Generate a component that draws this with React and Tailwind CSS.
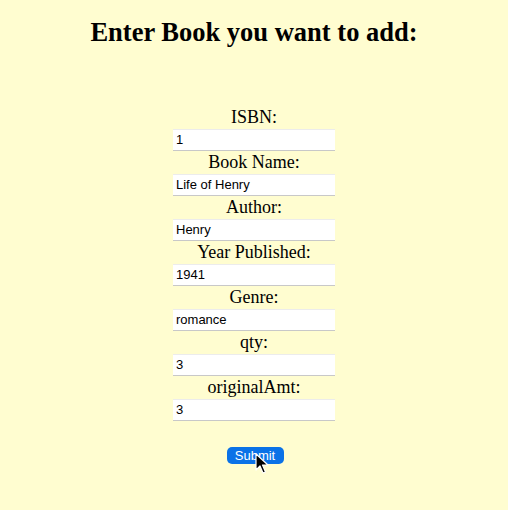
import React from "react";

const fields = [
  ["ISBN:", "1"],
  ["Book Name:", "Life of Henry"],
  ["Author:", "Henry"],
  ["Year Published:", "1941"],
  ["Genre:", "romance"],
  ["qty:", "3"],
  ["originalAmt:", "3"],
];

export default function App() {
  return (
    <div className="relative w-[508px] h-[510px] bg-[#fffdd0] flex flex-col items-center font-['Liberation_Serif',serif] text-black">
      <h1 className="mt-[17px] text-[26.5px] leading-[30px] font-bold">Enter Book you want to add:</h1>
      <div className="mt-[59px] flex flex-col items-center">
        {fields.map(([label, value]) => (
          <div key={label} className="flex flex-col items-center">
            <div className="text-[18px] leading-[23px] h-[23px]">{label}</div>
            <div className="w-[162px] h-[22px] bg-white border-t border-t-[#ececec] border-b border-b-[#c8c8c8] flex items-center pl-[3px] font-['Liberation_Sans',sans-serif] text-[13px] text-black">
              {value}
            </div>
          </div>
        ))}
        <button className="mt-[26px] ml-[2px] w-[57px] h-[17px] rounded-[5px] bg-[#0b72e7] text-white font-['Liberation_Sans',sans-serif] text-[13px] leading-[17px] font-medium">
          Submit
        </button>
      </div>
      <svg className="absolute left-[255px] top-[453px]" width="14" height="22" viewBox="0 0 14 22">
        <path d="M1 1 L1 17 L5 13 L8 20 L10.5 19 L7.5 12 L13 12 Z" fill="#000" stroke="#fff" strokeWidth="1.2" strokeLinejoin="round" />
      </svg>
    </div>
  );
}
